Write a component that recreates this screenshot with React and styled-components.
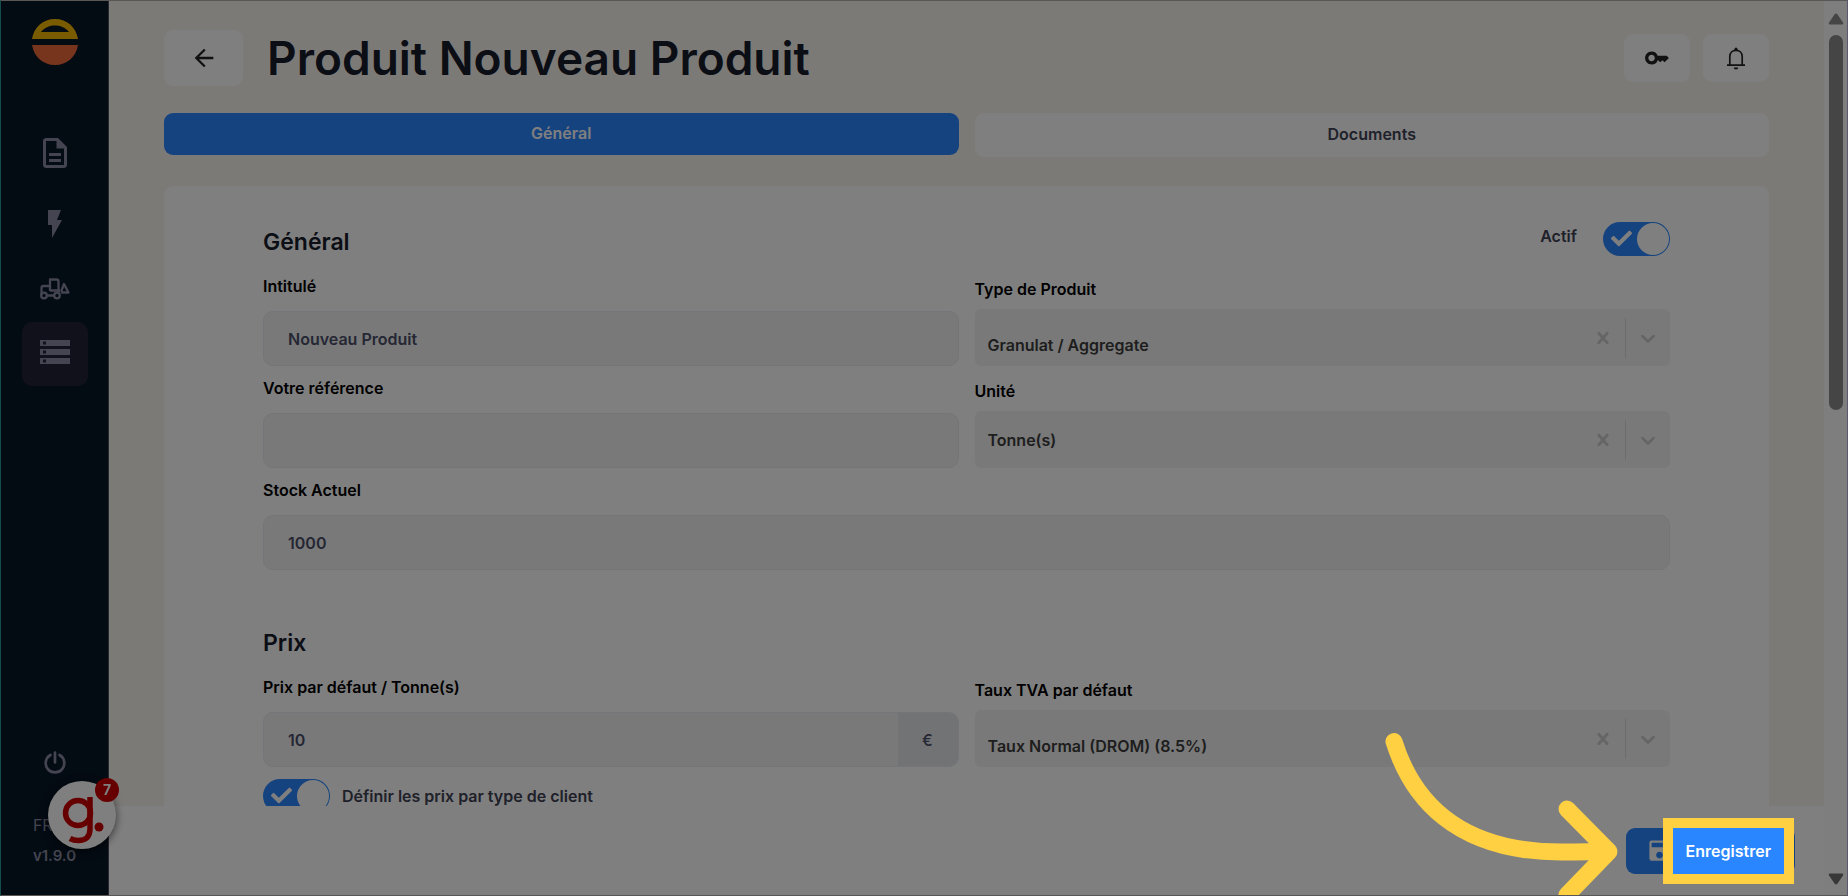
import React, {useState} from "react";
import styled, {createGlobalStyle, css} from "styled-components";
import {MdArrowBack, MdKey, MdOutlineDescription, MdSave, MdStorage} from "react-icons/md";
import {FaCheck} from "react-icons/fa";

const GlobalStyle = createGlobalStyle`
    *, *::before, *::after {
        box-sizing: border-box;
    }
    body {
        margin: 0;
        overflow: hidden;
        font-family: Inter, "Liberation Sans", sans-serif;
        font-size: 16px;
        color: #3f4254;
        background: #fff;
    }
    button, input, select {
        font-family: inherit;
        font-size: inherit;
        margin: 0;
    }
    svg {
        display: block;
        flex-shrink: 0;
    }
`;

function Logo() {
    return (
        <svg width="48" height="48" viewBox="0 0 48 48" aria-hidden="true">
            <path fill="#f5b800" fillRule="evenodd" d="M1 21C3 9 12 1 24 1s21 8 23 20zM10 14h28C34 9 29 7.500 24 7.500S14 9 10 14z" />
            <path fill="#f06a3a" d="M1 27h46c-2 12-11 20-23 20S3 39 1 27z" />
        </svg>
    );
}

function BoltIcon() {
    return (
        <svg width="16" height="28" viewBox="0 0 16 28" fill="currentColor" aria-hidden="true">
            <path d="M1 0h13l-4 10h5L5 28V15H1z" />
        </svg>
    );
}

function LoaderIcon() {
    return (
        <svg width="30" height="22" viewBox="0 0 30 22" fill="none" stroke="currentColor" strokeWidth="2.300" strokeLinejoin="round" aria-hidden="true">
            <path d="M1.500 17V10q0-2 2-2H10V1.500h6.500q2 0 2 2V14M10 8v5M7 17.500h7M10 12.500h10M10 12.500V8" />
            <path d="M21.500 12.500 24 6l4.500 8.500H22z" />
            <circle cx="4" cy="17.500" r="2.800" />
            <circle cx="17" cy="17.500" r="2.800" />
        </svg>
    );
}

function PowerIcon() {
    return (
        <svg width="24" height="24" viewBox="0 0 24 24" fill="none" stroke="currentColor" strokeWidth="2.700" strokeLinecap="round" aria-hidden="true">
            <path d="M7.500 5a9.300 9.300 0 1 0 9 0M12 2.500v10" />
        </svg>
    );
}

function BellIcon() {
    return (
        <svg width="20" height="23" viewBox="0 0 20 23" fill="none" stroke="currentColor" strokeWidth="1.700" aria-hidden="true">
            <path d="M1 18.200h18M3.800 18V9.500C3.800 5.800 6.300 3.400 10 3.400s6.200 2.400 6.200 6.100V18" />
            <path fill="currentColor" stroke="none" d="M8.400 3.500V2.200a1.600 1.600 0 0 1 3.200 0v1.300zM7.700 20.400h4.600a2.300 2 0 0 1-4.600 0z" />
        </svg>
    );
}

function CrossIcon() {
    return (
        <svg width="24" height="24" viewBox="0 0 20 20" fill="currentColor" aria-hidden="true">
            <path d="M14.348 14.849c-0.469 0.469-1.229 0.469-1.697 0l-2.651-3.030-2.651 3.029c-0.469 0.469-1.229 0.469-1.697 0-0.469-0.469-0.469-1.229 0-1.697l2.758-3.15-2.759-3.152c-0.469-0.469-0.469-1.228 0-1.697s1.228-0.469 1.697 0l2.652 3.031 2.651-3.031c0.469-0.469 1.228-0.469 1.697 0s0.469 1.229 0 1.697l-2.758 3.152 2.758 3.15c0.469 0.469 0.469 1.229 0 1.698z" />
        </svg>
    );
}

function ChevronIcon() {
    return (
        <svg width="24" height="24" viewBox="0 0 20 20" fill="currentColor" aria-hidden="true">
            <path d="M4.516 7.548c0.436-0.446 1.043-0.481 1.576 0l3.908 3.747 3.908-3.747c0.533-0.481 1.141-0.446 1.574 0 0.436 0.445 0.408 1.197 0 1.615-0.406 0.418-4.695 4.502-4.695 4.502-0.217 0.223-0.502 0.335-0.787 0.335s-0.57-0.112-0.789-0.335c0 0-4.287-4.084-4.695-4.502s-0.436-1.17 0-1.615z" />
        </svg>
    );
}

function TextField({id, label, type = "text", defaultValue, suffix, wide}) {
    return (
        <Field $gap={13} $wide={wide}>
            <Label htmlFor={id}>{label}</Label>
            <InputBox>
                <input id={id} type={type} defaultValue={defaultValue} />
                {suffix && <Suffix>{suffix}</Suffix>}
            </InputBox>
        </Field>
    );
}

function SelectField({id, label, options, low}) {
    const [value, setValue] = useState(options[0]);

    return (
        <Field $gap={8}>
            <Label htmlFor={id}>{label}</Label>
            <SelectBox $low={low}>
                <select id={id} value={value} onChange={(e) => setValue(e.target.value)}>
                    <option value="" hidden />
                    {options.map((option) => (
                        <option key={option}>{option}</option>
                    ))}
                </select>
                <ClearButton type="button" aria-label={`Effacer ${label}`} onClick={() => setValue("")}>
                    <CrossIcon />
                </ClearButton>
                <Chevron>
                    <ChevronIcon />
                </Chevron>
            </SelectBox>
        </Field>
    );
}

function Toggle({id}) {
    return (
        <Switch>
            <input id={id} type="checkbox" defaultChecked />
            <FaCheck size={21} />
        </Switch>
    );
}

export default function App() {
    const [tab, setTab] = useState("general");

    return (
        <>
            <GlobalStyle />
            <Shell>
                <Sidebar>
                    <Logo />
                    <Nav>
                        <NavLink href="#documents" aria-label="Documents">
                            <MdOutlineDescription size={36} />
                        </NavLink>
                        <NavLink href="#actions" aria-label="Actions rapides">
                            <BoltIcon />
                        </NavLink>
                        <NavLink href="#engins" aria-label="Engins">
                            <LoaderIcon />
                        </NavLink>
                        <NavLink href="#produits" aria-label="Produits" $active>
                            <MdStorage size={36} />
                        </NavLink>
                    </Nav>
                    <SidebarFooter>
                        <PowerButton type="button" aria-label="Déconnexion">
                            <PowerIcon />
                        </PowerButton>
                        <Language type="button">FR</Language>
                        <Version>v1.9.0</Version>
                    </SidebarFooter>
                </Sidebar>

                <Main>
                    <Page>
                        <Header>
                            <BackButton type="button" aria-label="Retour">
                                <MdArrowBack size={28} />
                            </BackButton>
                            <h1>Produit Nouveau Produit</h1>
                            <HeaderButton type="button" aria-label="Accès">
                                <MdKey size={26} />
                            </HeaderButton>
                            <HeaderButton type="button" aria-label="Notifications">
                                <BellIcon />
                            </HeaderButton>
                        </Header>

                        <Tabs role="tablist">
                            <Tab type="button" role="tab" aria-selected={tab === "general"} $active={tab === "general"} onClick={() => setTab("general")}>
                                Général
                            </Tab>
                            <Tab type="button" role="tab" aria-selected={tab === "documents"} $active={tab === "documents"} onClick={() => setTab("documents")}>
                                Documents
                            </Tab>
                        </Tabs>

                        <Card>
                            <section>
                                <SectionHeader>
                                    <h2>Général</h2>
                                    <label htmlFor="actif">Actif</label>
                                    <Toggle id="actif" />
                                </SectionHeader>
                                <Fields>
                                    <TextField id="intitule" label="Intitulé" defaultValue="Nouveau Produit" />
                                    <SelectField id="type" label="Type de Produit" options={["Granulat / Aggregate"]} low />
                                    <TextField id="reference" label="Votre référence" />
                                    <SelectField id="unite" label="Unité" options={["Tonne(s)"]} />
                                    <TextField id="stock" label="Stock Actuel" defaultValue="1000" wide />
                                </Fields>
                            </section>
                            <section>
                                <SectionHeader>
                                    <h2>Prix</h2>
                                </SectionHeader>
                                <Fields>
                                    <TextField id="prix" label="Prix par défaut / Tonne(s)" defaultValue="10" suffix="€" />
                                    <SelectField id="tva" label="Taux TVA par défaut" options={["Taux Normal (DROM) (8.5%)"]} low />
                                </Fields>
                                <SwitchRow>
                                    <Toggle id="prix-client" />
                                    <label htmlFor="prix-client">Définir les prix par type de client</label>
                                </SwitchRow>
                            </section>
                        </Card>
                    </Page>

                    <ActionBar>
                        <SaveButton type="submit">
                            <MdSave size={27} />
                            <SaveLabel>
                                Enregistrer
                                <Spotlight>
                                    <svg width="245" height="166" viewBox="0 0 245 166" fill="none" stroke="#ffd042" strokeWidth="17" strokeLinecap="round" strokeLinejoin="round" aria-hidden="true">
                                        <path d="M13 12.500C30 67 73 123 180 123c17 0 30 0 47-1M186 80l42 42.500L186 166" />
                                    </svg>
                                </Spotlight>
                            </SaveLabel>
                        </SaveButton>
                    </ActionBar>
                </Main>

                <ScrollTrack aria-hidden="true">
                    <svg width="16" height="12" viewBox="0 0 16 12" fill="#8b8b8b">
                        <path d="M6.500 1.500q1.500-2 3 0l5.500 8q.8 2-1 2H2q-1.800 0-1-2z" />
                    </svg>
                    <ScrollThumb />
                    <svg width="16" height="12" viewBox="0 0 16 12" fill="#707070">
                        <path d="M6.500 10.500q1.500 2 3 0l5.500-8q.8-2-1-2H2q-1.800 0-1 2z" />
                    </svg>
                </ScrollTrack>

                <Widget type="button" aria-label="Aide, 7 notifications">
                    <svg width="44" height="48" viewBox="0 0 44 48" fill="none" stroke="#cc0000" strokeWidth="5.500" aria-hidden="true">
                        <circle cx="17" cy="17" r="12.500" />
                        <path d="M29 1v32c0 8-4.500 11.500-11.500 11.500q-5 0-8.500-2" />
                        <circle cx="38" cy="31" r="4.500" fill="#cc0000" stroke="none" />
                    </svg>
                    <Badge>7</Badge>
                </Widget>
            </Shell>
        </>
    );
}

const Shell = styled.div`
    display: flex;
    height: 100vh;
    border: 1px solid #b0aeac;
    border-left-color: #2a9a9e;
    border-right-color: #b8b0e0;
`;

const Sidebar = styled.aside`
    display: flex;
    flex-direction: column;
    align-items: center;
    width: 108px;
    flex-shrink: 0;
    padding: 17px 0 27px;
    background: #071626;
    border-right: 1px solid #50525c;
    color: #888aa0;
`;

const Nav = styled.nav`
    display: flex;
    flex-direction: column;
    gap: 1px;
    margin-top: 55px;
`;

const NavLink = styled.a`
    display: flex;
    justify-content: center;
    align-items: center;
    width: 66px;
    height: 64px;
    border-radius: 10px;
    color: inherit;
    &:first-child {
        margin-bottom: 6px;
    }
    ${({$active}) => $active && css`
        padding-bottom: 4px;
        background: #222336;
    `}
`;

const SidebarFooter = styled.div`
    display: flex;
    flex-direction: column;
    margin-top: auto;
    line-height: 24px;
`;

const PowerButton = styled.button`
    align-self: center;
    padding: 4px;
    margin-bottom: 35px;
    border: 0;
    background: none;
    color: inherit;
`;

const Language = styled.button`
    padding: 0;
    margin-bottom: 7px;
    border: 0;
    background: none;
    color: inherit;
    line-height: 24px;
    text-align: left;
`;

const Version = styled.span`
    font-size: 15px;
    font-weight: 600;
`;

const Main = styled.main`
    display: flex;
    flex-direction: column;
    flex: 1;
    min-width: 0;
`;

const Page = styled.div`
    flex: 1;
    min-height: 0;
    overflow: hidden;
    padding: 29px 55px 0;
    background: #f8f4ef;
`;

const Header = styled.header`
    display: flex;
    align-items: center;
    gap: 13px;
    h1 {
        flex: 1;
        margin: 0 0 0 11px;
        font-size: 46px;
        line-height: 56px;
        font-weight: 600;
        color: #181c2c;
    }
`;

const HeaderButton = styled.button`
    display: flex;
    justify-content: center;
    align-items: center;
    width: 66px;
    height: 48px;
    padding: 0;
    border: 0;
    border-radius: 9px;
    background: #fff;
    color: #222;
`;

const BackButton = styled(HeaderButton)`
    width: 79px;
    height: 56px;
`;

const Tabs = styled.div`
    display: grid;
    grid-template-columns: 1fr 1fr;
    align-items: start;
    gap: 16px;
    height: 44px;
    margin: 27px 0 29px;
`;

const Tab = styled.button`
    height: ${({$active}) => ($active ? "42px" : "44px")};
    padding: 0 0 2px;
    border: 0;
    border-radius: 9px;
    background: ${({$active}) => ($active ? "#2a86ff" : "#fff")};
    color: ${({$active}) => ($active ? "#fff" : "#3f4254")};
    font-weight: 600;
`;

const Card = styled.form`
    display: flex;
    flex-direction: column;
    gap: 53px;
    padding: 36px 99px;
    border-radius: 9px;
    background: #fefefe;
`;

const SectionHeader = styled.div`
    display: flex;
    align-items: flex-start;
    gap: 26px;
    height: 38px;
    margin-bottom: 14px;
    h2 {
        flex: 1;
        margin: 0;
        font-size: 23px;
        line-height: 40px;
        font-weight: 600;
        color: #181c2c;
    }
    label {
        line-height: 28px;
        font-weight: 600;
    }
`;

const Fields = styled.div`
    display: grid;
    grid-template-columns: 1fr 1fr;
    gap: 10px 16px;
`;

const Field = styled.div`
    display: flex;
    flex-direction: column;
    justify-content: flex-end;
    gap: ${({$gap}) => $gap}px;
    min-width: 0;
    ${({$wide}) => $wide && "grid-column: 1 / -1;"}
`;

const Label = styled.label`
    line-height: 24px;
    font-weight: 600;
    color: #000;
`;

const InputBox = styled.div`
    display: flex;
    height: 55px;
    border: 1px solid #e8e9f2;
    border-radius: 10px;
    overflow: hidden;
    background: #f3f3f3;
    input {
        flex: 1;
        min-width: 0;
        padding: 0 24px;
        border: 0;
        outline: 0;
        background: none;
        color: #4b4f68;
        font-weight: 600;
    }
`;

const Suffix = styled.span`
    display: flex;
    justify-content: center;
    align-items: center;
    width: 60px;
    background: #e4e6ea;
    color: #4b4f68;
    font-weight: 500;
`;

const SelectBox = styled.div`
    display: flex;
    align-items: center;
    height: 57px;
    border-radius: 6px;
    background: #f3f3f3;
    color: #cbcbcb;
    select {
        flex: 1;
        align-self: stretch;
        min-width: 0;
        padding: ${({$low}) => ($low ? "15px" : "0")} 13px 0;
        border: 0;
        outline: 0;
        appearance: none;
        background: none;
        color: #3c3c3c;
        font-weight: 600;
    }
`;

const ClearButton = styled.button`
    padding: 10px;
    border: 0;
    background: none;
    color: inherit;
`;

const Chevron = styled.span`
    padding: 8px 10px;
    border-left: 1px solid #dadada;
`;

const Switch = styled.span`
    position: relative;
    display: flex;
    input {
        display: flex;
        justify-content: flex-start;
        width: 67px;
        height: 34px;
        padding: 1px;
        border-radius: 17px;
        appearance: none;
        background: #c9ced8;
    }
    input:checked {
        justify-content: flex-end;
        background: #2a86ff;
    }
    input::after {
        content: "";
        width: 32px;
        height: 32px;
        border-radius: 50%;
        background: #fff;
    }
    svg {
        position: absolute;
        left: 8px;
        top: 6px;
        color: #fff;
        pointer-events: none;
    }
`;

const SwitchRow = styled.div`
    display: flex;
    align-items: center;
    gap: 12px;
    margin-top: 12px;
    label {
        font-weight: 600;
    }
`;

const ActionBar = styled.footer`
    display: flex;
    justify-content: flex-end;
    align-items: center;
    height: 89px;
    flex-shrink: 0;
    padding: 0 29px;
    background: #fff;
`;

const SaveButton = styled.button`
    display: flex;
    align-items: center;
    gap: 13px;
    height: 46px;
    padding: 0 24px 0 20px;
    border: 0;
    border-radius: 9px;
    background: #2a86ff;
    color: #fff;
    font-weight: 600;
`;

const SaveLabel = styled.span`
    position: relative;
`;

// tour step: frames the label and dims the rest of the window
const Spotlight = styled.span`
    position: absolute;
    z-index: 10;
    inset: -23px;
    border: 10px solid #ffd042;
    box-shadow: 0 0 0 3000px rgba(0, 0, 0, 0.5);
    pointer-events: none;
    svg {
        position: absolute;
        left: -292px;
        top: -99px;
    }
`;

const ScrollTrack = styled.div`
    display: flex;
    flex-direction: column;
    align-items: center;
    width: 23px;
    padding: 12px 0 10px;
    background: #fcfcfd;
    svg:last-child {
        margin-top: auto;
    }
`;

const ScrollThumb = styled.div`
    width: 14px;
    height: 43%;
    margin-top: 10px;
    border-radius: 7px;
    background: #8b8b8b;
`;

const Widget = styled.button`
    position: fixed;
    left: 48px;
    bottom: 47px;
    z-index: 1;
    width: 68px;
    height: 68px;
    padding: 9px 0 0 13px;
    border: 0;
    border-radius: 50%;
    background: #fff;
    box-shadow: 0 2px 8px rgba(0, 0, 0, 0.6);
`;

const Badge = styled.span`
    position: absolute;
    right: -3px;
    top: -3px;
    width: 24px;
    border-radius: 50%;
    background: #cc0000;
    color: #fff;
    font-size: 14px;
    line-height: 24px;
    font-weight: 700;
    text-align: center;
`;
